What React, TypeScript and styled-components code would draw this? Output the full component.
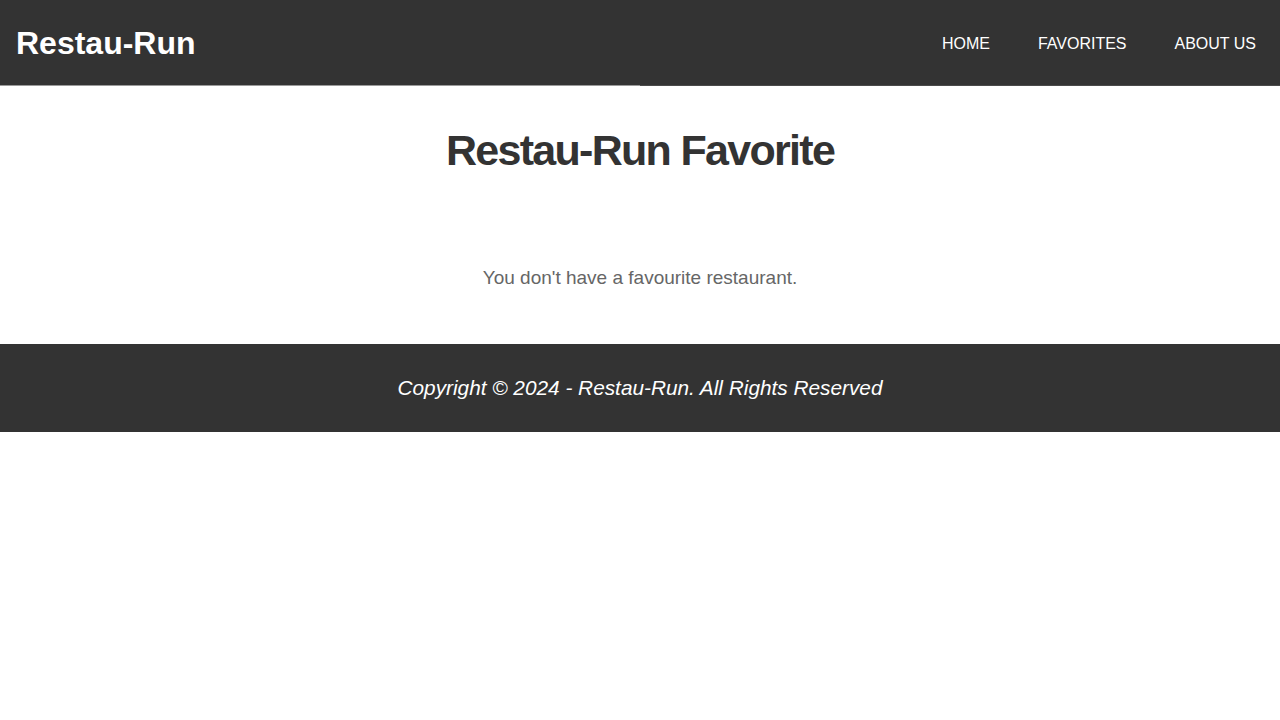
import React from "react";
import styled, { createGlobalStyle } from "styled-components";

const Global = createGlobalStyle`
  html, body { margin: 0; padding: 0; background: #fff; }
  body { font-family: "Liberation Sans", Arial, Helvetica, sans-serif; }
  * { box-sizing: border-box; }
`;

const Header = styled.header`
  display: flex;
  align-items: center;
  justify-content: space-between;
  height: 86px;
  padding-left: 16px;
  background: #333333;
  border-bottom: 1px solid #999;
  border-image: linear-gradient(to right, #9a9a9a 50%, #4a4a4a 50%) 1;
`;

const Logo = styled.div`
  color: #fff;
  font-size: 32px;
  font-weight: 700;
  line-height: 1;
  margin-top: 1px;
`;

const Nav = styled.nav`
  display: flex;
  align-items: center;
`;

const NavLink = styled.a`
  color: #fff;
  text-decoration: none;
  font-size: 16px;
  padding: 0 24px;
  line-height: 1;
  margin-top: 2px;
`;

const Main = styled.main`
  display: flex;
  flex-direction: column;
  align-items: center;
  padding: 40px 16px 55px;
`;

const Title = styled.h1`
  margin: 0;
  color: #333;
  font-size: 43px;
  font-weight: 700;
  letter-spacing: -1.7px;
  line-height: 48px;
`;

const Empty = styled.p`
  margin: 93px 0 0;
  color: #666;
  font-size: 19px;
  line-height: 22px;
`;

const Footer = styled.footer`
  display: flex;
  align-items: center;
  justify-content: center;
  height: 88px;
  background: #333;
  color: #fff;
  font-size: 20.8px;
  font-style: italic;
`;

export default function App() {
  return (
    <>
      <Global />
      <Header>
        <Logo>Restau-Run</Logo>
        <Nav>
          <NavLink href="#">HOME</NavLink>
          <NavLink href="#">FAVORITES</NavLink>
          <NavLink href="#">ABOUT US</NavLink>
        </Nav>
      </Header>
      <Main>
        <Title>Restau-Run Favorite</Title>
        <Empty>You don't have a favourite restaurant.</Empty>
      </Main>
      <Footer>Copyright © 2024 - Restau-Run. All Rights Reserved</Footer>
    </>
  );
}
